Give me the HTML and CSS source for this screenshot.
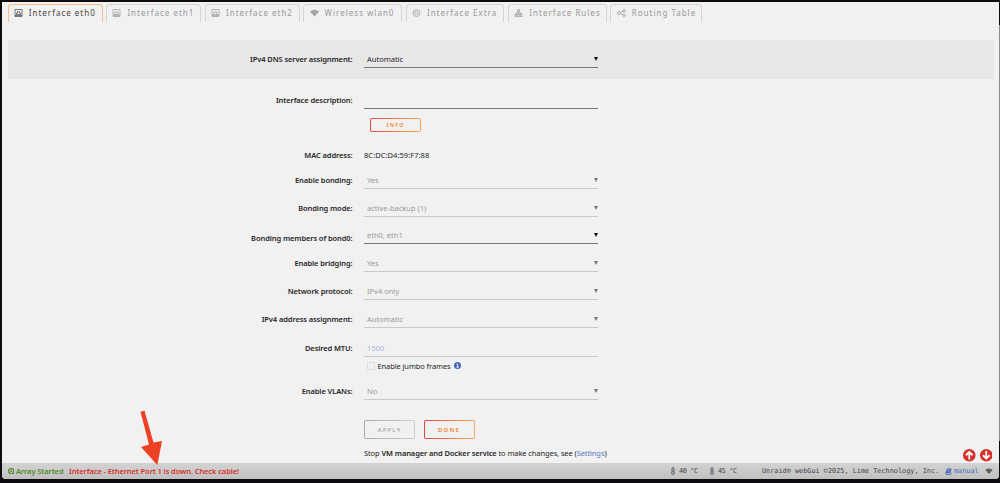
FILE: index.html
```html
<!DOCTYPE html>
<html lang="en">
<head>
<meta charset="utf-8">
<title>Network Settings</title>
<link rel="stylesheet" href="styles.css">
</head>
<body>
<svg width="0" height="0" class="defs">
  <symbol id="port" viewBox="0 0 16 16"><path d="M1 1h14v14H1z M4 11V8h2V5.500h4V8h2v3z M1 13h14" fill="none" stroke="currentColor" stroke-width="1.400"/></symbol>
  <symbol id="wifi" viewBox="0 0 20 16"><path d="M0 5Q10-3 20 5L10 15z" fill="currentColor"/><path d="M2 7Q10 1 18 7M5 10Q10 6 15 10" fill="none" stroke="#f1f1f1" stroke-width=".7"/></symbol>
  <symbol id="target" viewBox="0 0 16 16"><g fill="none" stroke="currentColor" stroke-width="1.500"><circle cx="8" cy="8" r="7"/><circle cx="8" cy="8" r="3.200"/></g></symbol>
  <symbol id="tree" viewBox="0 0 16 16"><path d="M6 1h4v4H6zM1 11h3.500v4H1zM6.300 11h3.500v4H6.300zM11.500 11H15v4h-3.500zM8 5v6M2.700 11V8h10.600v3" fill="none" stroke="currentColor" stroke-width="1.500"/></symbol>
  <symbol id="share" viewBox="0 0 18 16"><g fill="none" stroke="currentColor" stroke-width="1.500"><circle cx="4" cy="8" r="3"/><circle cx="14" cy="3.500" r="2.500"/><circle cx="14" cy="12.500" r="2.500"/><path d="M7 7l5-2.500M7 9l5 2.500"/></g></symbol>
  <symbol id="therm" viewBox="0 0 8 16"><path d="M2 9V3a2 2 0 0 1 4 0v6a3.200 3.200 0 1 1-4 0z" fill="none" stroke="currentColor" stroke-width="1.600"/><path d="M4 5v7" stroke="currentColor" stroke-width="1.200"/></symbol>
  <symbol id="book" viewBox="0 0 16 16"><path d="M5 1h10l-2 11H3q-1 1 1 1.500h9l1-2h1l-1 4H3Q0 14 1 11z" fill="currentColor"/><path d="M6.500 4.500h5M5.700 7h5" stroke="#c9c9c9"/></symbol>
</svg>
<div class="window">
  <nav class="tabs">
    <div class="tab active w95"><svg class="ti"><use href="#port"/></svg><span>Interface eth0</span></div>
    <div class="tab w95"><svg class="ti"><use href="#port"/></svg><span>Interface eth1</span></div>
    <div class="tab w95"><svg class="ti"><use href="#port"/></svg><span>Interface eth2</span></div>
    <div class="tab w99"><svg class="ti"><use href="#wifi"/></svg><span>Wireless wlan0</span></div>
    <div class="tab w99"><svg class="ti"><use href="#target"/></svg><span>Interface Extra</span></div>
    <div class="tab w99"><svg class="ti"><use href="#tree"/></svg><span>Interface Rules</span></div>
    <div class="tab w92"><svg class="ti"><use href="#share"/></svg><span>Routing Table</span></div>
  </nav>
  <main class="form">
    <section class="band">
      <div class="row"><label>IPv4 DNS server assignment:</label><div class="field on"><span>Automatic</span><i class="caret"></i></div></div>
    </section>
    <div class="row desc"><label>Interface description:</label><div class="field on"></div></div>
    <div class="info-line"><button class="btn small">INFO</button></div>
    <div class="row mac"><label>MAC address:</label><div class="plain">8C:DC:D4:59:F7:88</div></div>
    <div class="row gap9"><label>Enable bonding:</label><div class="field"><span>Yes</span><i class="caret"></i></div></div>
    <div class="row gap12"><label>Bonding mode:</label><div class="field"><span>active-backup (1)</span><i class="caret"></i></div></div>
    <div class="row gap10 members"><label>Bonding members of bond0:</label><div class="field on"><span>eth0, eth1</span><i class="caret"></i></div></div>
    <div class="row gap13"><label>Enable bridging:</label><div class="field"><span>Yes</span><i class="caret"></i></div></div>
    <div class="row gap12"><label>Network protocol:</label><div class="field"><span>IPv4 only</span><i class="caret"></i></div></div>
    <div class="row gap12"><label>IPv4 address assignment:</label><div class="field"><span>Automatic</span><i class="caret"></i></div></div>
    <div class="row gap13"><label>Desired MTU:</label><div class="field mtu"><span>1500</span></div></div>
    <div class="jumbo"><i class="box"></i><span>Enable jumbo frames</span><svg viewBox="0 0 14 14"><circle cx="7" cy="7" r="7" fill="#4265bb"/><path d="M5 6h2.500v4.500M5 10.500h4.500M6 3.500h2" fill="none" stroke="#fff" stroke-width="1.800"/></svg></div>
    <div class="row vlan"><label>Enable VLANs:</label><div class="field"><span>No</span><i class="caret"></i></div></div>
    <div class="actions"><button class="btn off">APPLY</button><button class="btn">DONE</button></div>
    <p class="note">Stop <b>VM manager and Docker service</b> to make changes, see (<a>Settings</a>)</p>
  </main>
  <footer class="status">
    <svg class="play" viewBox="0 0 12 12"><circle cx="6" cy="6" r="4.900" fill="none" stroke="#4f8a29" stroke-width="2.200"/><path d="M4.500 3.500L9 6 4.500 8.500z" fill="#4f8a29"/></svg>
    <span class="started">Array Started</span>
    <span class="alert">Interface - Ethernet Port 1 is down. Check cable!</span>
    <span class="temp t1"><svg><use href="#therm"/></svg>40 °C</span>
    <span class="temp t2"><svg><use href="#therm"/></svg>45 °C</span>
    <span class="copy">Unraid® webGui ©2025, Lime Technology, Inc.</span>
    <a class="manual"><svg><use href="#book"/></svg>manual</a>
    <svg class="fw"><use href="#wifi"/></svg>
  </footer>
</div>
<div class="scrollbar"></div>
<div class="jumps">
  <svg viewBox="0 0 12 12"><circle cx="6" cy="6" r="6" fill="#d6322b"/><path d="M6 10V3M2.800 6L6 2.800 9.200 6" fill="none" stroke="#fff" stroke-width="1.700"/></svg>
  <svg viewBox="0 0 12 12"><circle cx="6" cy="6" r="6" fill="#d6322b"/><path d="M6 2v7M2.800 6L6 9.200 9.200 6" fill="none" stroke="#fff" stroke-width="1.700"/></svg>
</div>
<svg class="arrow" viewBox="0 0 24 56"><path d="M0.500 1.800L4.500 0.700 13.500 32.500 22 31 17.300 55 1 37 9 34.500z" fill="#ed4024"/></svg>
</body>
</html>
```
FILE: styles.css
```css
* { box-sizing: border-box; }
body {
  margin: 0;
  width: 1000px;
  height: 483px;
  overflow: hidden;
  position: relative;
  padding: 2px 1px 0 2px;
  background: #0e0c10;
  font-family: "Noto Sans", sans-serif;
  font-size: 7.5px;
  letter-spacing: -0.1px;
  color: #262626;
}
.defs { position: absolute; }
.window {
  height: 477px;
  background: #f1f1f1;
  border-radius: 0 0 4px 4px;
  overflow: hidden;
  display: flex;
  flex-direction: column;
}
.tabs { display: flex; gap: 3.600px; padding: 2px 0 0 5.500px; height: 20px; flex: none; }
.tab {
  height: 18px;
  border: 1px solid #d5d5d5;
  border-bottom: 0;
  border-radius: 4px 4px 0 0;
  display: flex;
  align-items: center;
  padding: 0 0 2px 5.300px;
  gap: 6px;
  color: #999;
  font-size: 8px;
  letter-spacing: 1px;
  white-space: nowrap;
}
.tab.active { border-color: #f9bd8f; color: #444; }
.w95 { width: 95px; }
.w99 { width: 98.800px; }
.w92 { width: 92px; }
.ti { width: 9px; height: 8px; flex: none; }
.form { flex: 1; padding: 18px 5px 0 6px; }
.band { height: 39px; padding-top: 12px; background: #e7e7e7; }
.row { display: grid; grid-template-columns: 344.500px 234px; grid-template-rows: 16px; column-gap: 11.500px; height: 16px; }
.row label { text-align: right; font-weight: 600; line-height: 15px; white-space: nowrap; }
.field {
  border-bottom: 1px solid #c9c9c9;
  padding: 0 0 1px 3px;
  display: flex;
  align-items: center;
  justify-content: space-between;
  color: #999;
  letter-spacing: 0;
}
.field.on { border-color: #777; }
.band .field { color: #262626; }
.caret { border: 2px solid transparent; border-top: 4px solid #777; border-bottom: 0; }
.on .caret { border-top-color: #111; }
.desc { margin-top: 14px; }
.info-line { padding: 9px 0 0 362px; height: 23px; display: flex; }
.btn {
  width: 51px;
  height: 19px;
  padding: 0;
  border: 1px solid transparent;
  border-radius: 2px;
  background: linear-gradient(#f1f1f1, #f1f1f1) padding-box, linear-gradient(90deg, #e0483f, #f8a860) border-box;
  font: bold 6px "Noto Sans", sans-serif;
  letter-spacing: 1.1px;
  color: #f58f42;
}
.btn.small { height: 14px; font-size: 5.300px; }
.btn.off { color: #b5b5b5; background: linear-gradient(#f1f1f1, #f1f1f1) padding-box, linear-gradient(90deg, #aaa, #ccc) border-box; }
.mac { margin-top: 16px; }
.plain { line-height: 15px; letter-spacing: 0.05px; }
.gap9 { margin-top: 9px; }
.gap10 { margin-top: 11px; }
.gap12 { margin-top: 12px; }
.gap13 { margin-top: 13px; }
.members label { padding-top: 3px; }
.members + .row { margin-top: 12px; }
.mtu { color: #a7b7e0; }
.jumbo { height: 17px; padding-left: 358.500px; display: flex; align-items: center; gap: 3px; }
.jumbo svg { width: 7px; height: 7px; }
.box { width: 8px; height: 8px; border: 1px solid #ddd; border-radius: 1px; }
.vlan { margin-top: 10px; }
.actions { display: flex; gap: 8.500px; padding: 20px 0 0 356px; }
.note { margin: 8px 0 0; padding-left: 356px; line-height: 12px; white-space: nowrap; }
.note b { font-weight: 600; }
.note a { color: #5b78c5; }
.status {
  height: 16px;
  flex: none;
  background: linear-gradient(#d3d3d3, #c0c0c0);
  display: flex;
  align-items: center;
  padding-left: 5.500px;
  white-space: nowrap;
}
.status > * { flex: none; }
.play { width: 6.500px; height: 6.500px; margin-right: 2px; }
.started { width: 53px; color: #4f8a29; font-weight: 600; }
.alert { width: 602px; color: #d6322b; font-weight: 600; }
.temp, .copy, .manual { font-family: "DejaVu Sans Mono", monospace; font-size: 6.850px; letter-spacing: 0; color: #444; display: flex; align-items: center; }
.temp { width: 39px; gap: 4px; letter-spacing: -0.4px; }
.temp svg { width: 4px; height: 8px; }
.t2 { width: 52px; }
.copy { width: 183px; }
.manual { width: 40px; gap: 2px; color: #4b6cc0; }
.manual svg { width: 7px; height: 7px; }
.fw { width: 8px; height: 6px; color: #444; }
.scrollbar { position: absolute; left: 999px; top: 25px; width: 1px; height: 416px; background: #8d8d8d; }
.jumps { position: absolute; left: 963px; top: 449px; display: flex; gap: 4px; }
.jumps svg { width: 12.500px; height: 12.500px; }
.arrow { position: absolute; left: 140px; top: 410px; width: 24px; height: 56px; }
```
